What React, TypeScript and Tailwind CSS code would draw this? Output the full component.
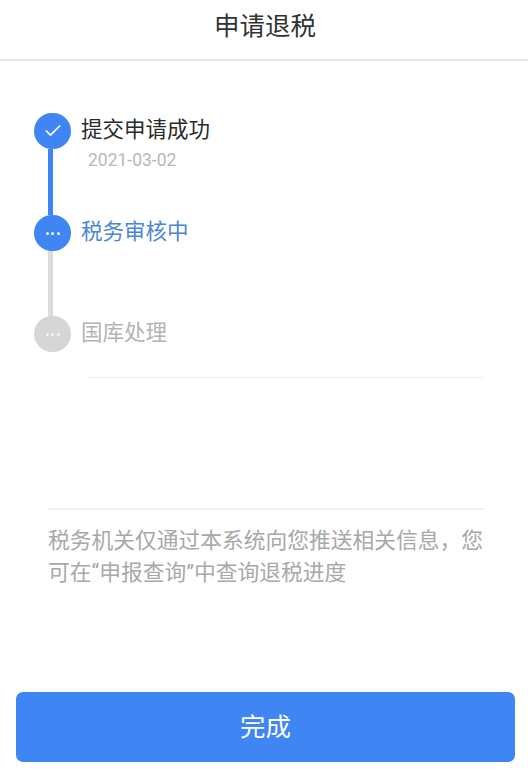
import { Check } from "lucide-react";

const FONT = "font-['Roboto','Noto_Sans_CJK_SC',sans-serif]";

function Dots({ faint }: { faint?: boolean }) {
  const dot = faint ? "w-[3px] h-[3px] rounded-full bg-[#f4f4f4]" : "w-[3px] h-[3px] rounded-full bg-white";
  return (
    <span className="flex items-center gap-[2.5px]">
      <span className={dot} />
      <span className={dot} />
      <span className={dot} />
    </span>
  );
}

export default function App() {
  return (
    <div className={`${FONT} w-[528px] h-[772px] bg-white flex flex-col overflow-hidden`}>
      <header className="h-[61px] shrink-0 flex items-center justify-center border-b-2 border-[#e8e8e8] pb-[5px] pl-[2px]">
        <h1 className="text-[25.5px] leading-none font-normal text-[#333]">申请退税</h1>
      </header>

      <div className="pl-[34px] pt-[52px]">
        {/* step 1 */}
        <div className="flex h-[102px]">
          <div className="w-[37px] flex flex-col items-start">
            <span className="w-[37px] h-[36px] shrink-0 rounded-full bg-[#3f85f4] flex items-center justify-center">
              <Check className="w-[20px] h-[20px] text-white" strokeWidth={2} />
            </span>
            <span className="ml-[13.5px] w-[5px] flex-1 bg-[#3f85f4]" />
          </div>
          <div className="ml-[10px]">
            <p className="text-[21.5px] leading-[34px] text-[#2b2b2b]">提交申请成功</p>
            <p className="ml-[7px] mt-[3px] text-[17.5px] leading-[20px] text-[#b8b8b8]">2021-03-02</p>
          </div>
        </div>

        {/* step 2 */}
        <div className="flex h-[101px]">
          <div className="w-[37px] flex flex-col items-start">
            <span className="w-[37px] h-[36px] shrink-0 rounded-full bg-[#3f85f4] flex items-center justify-center">
              <Dots />
            </span>
            <span className="ml-[13.5px] w-[5px] flex-1 bg-[#dcdcdc]" />
          </div>
          <p className="ml-[10px] text-[21.5px] leading-[34px] text-[#4a86d8]">税务审核中</p>
        </div>

        {/* step 3 */}
        <div className="flex">
          <span className="w-[37px] h-[36px] shrink-0 rounded-full bg-[#d6d6d6] flex items-center justify-center">
            <Dots faint />
          </span>
          <p className="ml-[10px] text-[21.5px] leading-[34px] text-[#b4b4b4]">国库处理</p>
        </div>
      </div>

      <div className="ml-[88px] mr-[45px] mt-[25px] border-t border-dotted border-[#dfdfdf]" />

      <div className="ml-[48px] mr-[44px] mt-[130px] border-t-2 border-[#efefef] pt-[15px]">
        <p className="text-[21.75px] leading-[32px] text-[#a8a8a8]">
          税务机关仅通过本系统向您推送相关信息，您可在“申报查询”中查询退税进度
        </p>
      </div>

      <div className="mt-auto pl-[16px] pr-[13px] pb-[10px]">
        <button className="w-full h-[70px] rounded-[7px] bg-[#3f85f4] text-white text-[25.5px]">完成</button>
      </div>
    </div>
  );
}
